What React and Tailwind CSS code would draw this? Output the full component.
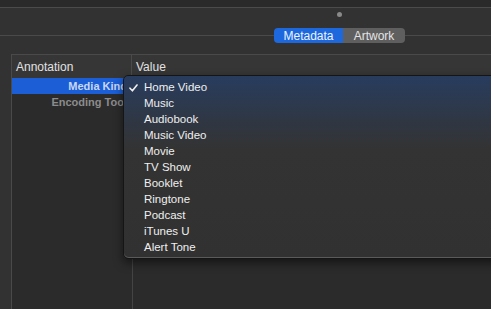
const kinds = [
  "Home Video",
  "Music",
  "Audiobook",
  "Music Video",
  "Movie",
  "TV Show",
  "Booklet",
  "Ringtone",
  "Podcast",
  "iTunes U",
  "Alert Tone",
];

function KindMenu() {
  return (
    <div className="absolute left-[123px] top-[75px] w-[400px] h-[184px] rounded-[5px] border border-[#151515] bg-gradient-to-b from-[#283c5e] via-[#333333] via-40% to-[#313131] shadow-[0_4px_10px_rgba(0,0,0,0.5)] pt-[4px]">
      <div className="absolute inset-0 rounded-[5px] border-b border-[#5a5a5a] pointer-events-none" />
      {kinds.map((k, i) => (
        <div key={k} className="relative h-[16px] flex items-center pl-[20px] text-[11.5px] text-[#efefef] leading-none">
          {i === 0 && (
            <svg className="absolute left-[5px] top-[4px]" width="9" height="8" viewBox="0 0 9 8">
              <path d="M1 4.2 L3.4 6.8 L8 1" fill="none" stroke="#efefef" strokeWidth="1.6" strokeLinecap="round" strokeLinejoin="round" />
            </svg>
          )}
          {k}
        </div>
      ))}
    </div>
  );
}

export default function App() {
  return (
    <div className="relative w-[491px] h-[309px] overflow-hidden bg-[#323232] font-['Liberation_Sans',Arial,sans-serif] flex flex-col">
      {/* title strip */}
      <div className="h-[8px] bg-[#2a2a2a] border-b border-[#4b4b4b] shrink-0" />

      {/* tab switcher */}
      <div className="flex flex-col shrink-0">
        <div className="ml-[337px] mt-[4px] w-[5px] h-[5px] rounded-full bg-[#8a8a8a]" />
        <div className="flex items-center mt-[11px] h-[15px]">
          <div className="flex-1 h-px bg-[#4a4a4a]" />
          <div className="flex h-[15px] rounded-[4px] overflow-hidden text-[12px] leading-none">
            <div className="w-[69px] bg-[#1e68de] text-[#eef3ff] flex items-center justify-center">Metadata</div>
            <div className="w-[62px] bg-[#5f5f5f] text-[#e4e4e4] flex items-center justify-center">Artwork</div>
          </div>
          <div className="w-[86px] h-px bg-[#4a4a4a]" />
        </div>
      </div>

      {/* table */}
      <div className="mt-[11px] ml-[11px] flex-1 border-l border-t border-[#4a4a4a] bg-[#2b2b2b] flex flex-col">
        <div className="h-[23px] bg-[#363636] flex text-[12px] text-[#e2e2e2] shrink-0">
          <div className="w-[120px] border-r border-[#4a4a4a] pl-[4px] pt-[3px]">Annotation</div>
          <div className="flex-1 pl-[4px] pt-[3px]">Value</div>
        </div>
        <div className="flex flex-1">
          <div className="w-[121px] border-r border-[#444444] text-[11px] font-bold text-right flex flex-col">
            <div className="h-[16px] bg-[#1b5ed6] text-[#c9d7f3] pr-[5px] flex items-center justify-end whitespace-nowrap">Media Kind</div>
            <div className="h-[16px] text-[#8c8c8c] pr-[5px] flex items-center justify-end whitespace-nowrap">Encoding Tool</div>
          </div>
          <div className="flex-1" />
        </div>
      </div>

      <KindMenu />
    </div>
  );
}
